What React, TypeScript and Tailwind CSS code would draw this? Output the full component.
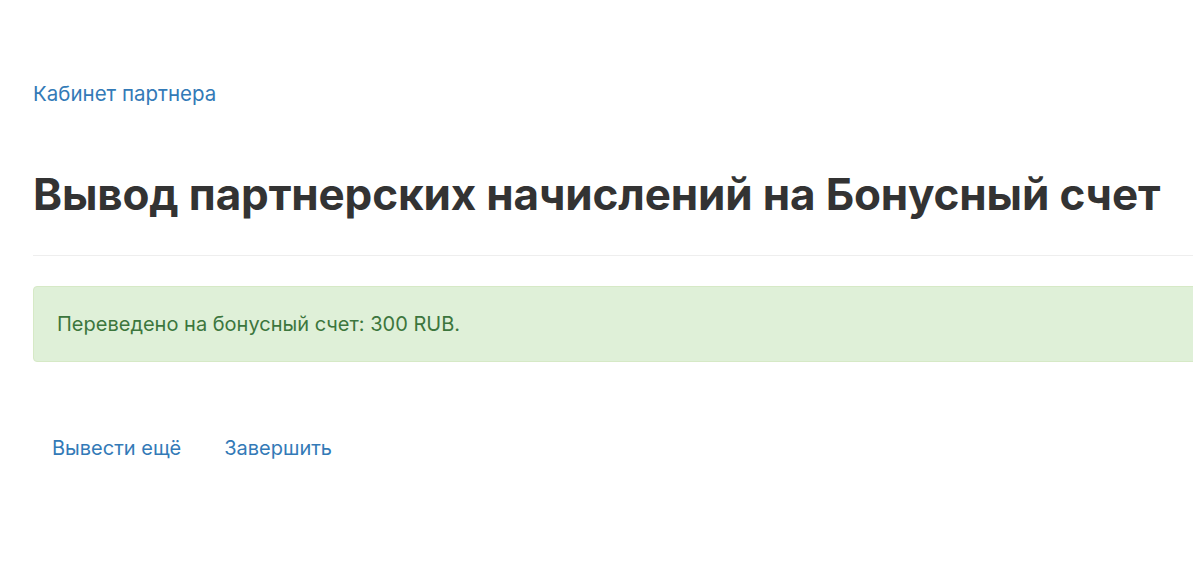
export default function App() {
  return (
    <div className="min-h-[565px] w-full overflow-hidden bg-white font-['Inter','Noto_Sans',sans-serif] text-[#333]">
      <div className="w-[1240px] pl-[33px] pt-[80px]">
        <a href="#" className="text-[20.5px] leading-[28px] text-[#337ab7]">
          Кабинет партнера
        </a>
        <h1 className="mt-[58px] text-[44px] font-bold leading-[56px] tracking-[-0.15px] text-[#333]">
          Вывод партнерских начислений на Бонусный счет
        </h1>
        <hr className="mt-[33px] border-t border-[#eee]" />
        <div className="mt-[30px] rounded-[4px] border border-[#d6e9c6] bg-[#dff0d8] px-[23px] py-[25px] text-[20px] leading-[24px] text-[#3c763d]">
          Переведено на бонусный счет: 300 RUB.
        </div>
        <div className="mt-[72px] flex items-center gap-[43px] pl-[19px]">
          <a href="#" className="text-[20px] leading-[28px] text-[#337ab7]">
            Вывести ещё
          </a>
          <a href="#" className="text-[20px] leading-[28px] text-[#337ab7]">
            Завершить
          </a>
        </div>
      </div>
    </div>
  );
}
